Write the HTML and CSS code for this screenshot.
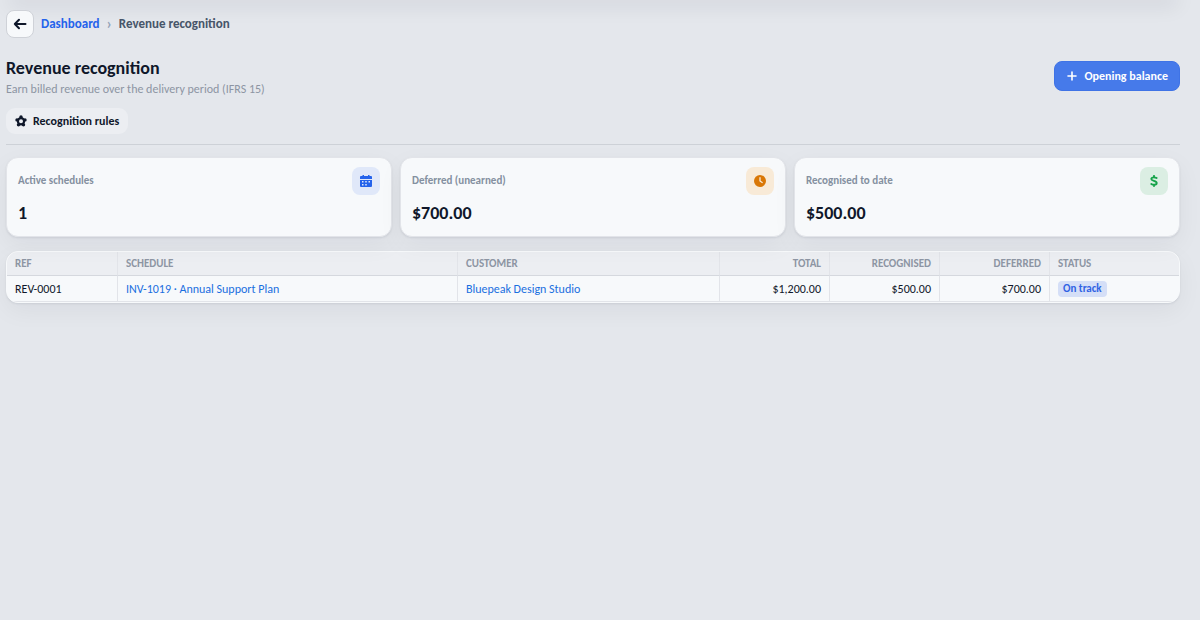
FILE: index.html
```html
<!DOCTYPE html>
<html lang="en">
<head>
    <meta charset="UTF-8">
    <meta name="viewport" content="width=device-width, initial-scale=1.0">
    <title>Revenue recognition</title>
    <link rel="stylesheet" href="styles.css">
</head>
<body>

<div class="topbar-edge"></div>

<main class="page">
    <nav class="breadcrumb" aria-label="Breadcrumb">
        <button type="button" class="back-button" aria-label="Back">
            <svg width="14" height="14" viewBox="0 0 14 14" fill="none" stroke="currentColor" stroke-width="2" stroke-linecap="round" stroke-linejoin="round"><path d="M12.5 7H1.8M6 2.7L1.8 7L6 11.3"/></svg>
        </button>
        <a href="#">Dashboard</a>
        <span class="separator">›</span>
        <span class="current">Revenue recognition</span>
    </nav>

    <header class="page-header">
        <div>
            <h1>Revenue recognition</h1>
            <p class="subtitle">Earn billed revenue over the delivery period (IFRS 15)</p>
        </div>
        <button type="button" class="primary-button">
            <svg width="10" height="10" viewBox="0 0 10 10" fill="none" stroke="currentColor" stroke-width="1.6" stroke-linecap="round"><path d="M5 1v8M1 5h8"/></svg>
            Opening balance
        </button>
    </header>

    <div class="toolbar">
        <button type="button" class="rules-button">
            <svg width="12" height="12" viewBox="0 0 12 12" fill="currentColor"><circle cx="6" cy="6.2" r="3.1" fill="none" stroke="currentColor" stroke-width="2.2"/><circle cx="6" cy="2" r="1.7"/><circle cx="10" cy="4.9" r="1.7"/><circle cx="8.5" cy="9.8" r="1.7"/><circle cx="3.5" cy="9.8" r="1.7"/><circle cx="2" cy="4.9" r="1.7"/></svg>
            Recognition rules
        </button>
    </div>

    <section class="stats">
        <div class="card">
            <div class="card-top">
                <span class="card-label">Active schedules</span>
                <span class="card-icon blue">
                    <svg width="12" height="12" viewBox="0 0 12 12"><path fill="currentColor" fill-rule="evenodd" d="M2.5 0h1.5v1h4V0h1.5v1H11q1 0 1 1v2H0V2q0-1 1-1h1.5ZM0 5h12v6q0 1-1 1H1q-1 0-1-1ZM2 6v1.5h1.5V6ZM5.25 6v1.5h1.5V6ZM8.5 6v1.5H10V6ZM2 9v1.5h1.5V9ZM5.25 9v1.5h1.5V9Z"/></svg>
                </span>
            </div>
            <div class="card-value">1</div>
        </div>
        <div class="card">
            <div class="card-top">
                <span class="card-label">Deferred (unearned)</span>
                <span class="card-icon orange">
                    <svg width="12" height="12" viewBox="0 0 12 12"><circle cx="6" cy="6" r="6" fill="currentColor"/><path d="M6 2.7V6l2.2 1.5" fill="none" stroke="#f8ead7" stroke-width="1.3" stroke-linecap="round" stroke-linejoin="round"/></svg>
                </span>
            </div>
            <div class="card-value">$700.00</div>
        </div>
        <div class="card">
            <div class="card-top">
                <span class="card-label">Recognised to date</span>
                <span class="card-icon green">
                    <svg width="12" height="12" viewBox="0 0 12 12" fill="none" stroke="currentColor" stroke-width="1.9" stroke-linecap="round"><path d="M6 .9v1.3M6 9.8v1.3M8.6 3C7.6 2.3 3.5 1.6 3.3 4C3.2 6.2 8.7 5.6 8.7 8C8.7 10.5 4.4 9.8 3.3 9"/></svg>
                </span>
            </div>
            <div class="card-value">$500.00</div>
        </div>
    </section>

    <div class="table-wrap">
        <table>
            <thead>
                <tr>
                    <th class="col-ref">Ref</th>
                    <th class="col-schedule">Schedule</th>
                    <th>Customer</th>
                    <th class="col-amount">Total</th>
                    <th class="col-amount">Recognised</th>
                    <th class="col-amount">Deferred</th>
                    <th class="col-status">Status</th>
                </tr>
            </thead>
            <tbody>
                <tr>
                    <td>REV-0001</td>
                    <td><a href="#">INV-1019 · Annual Support Plan</a></td>
                    <td><a href="#">Bluepeak Design Studio</a></td>
                    <td class="col-amount">$1,200.00</td>
                    <td class="col-amount">$500.00</td>
                    <td class="col-amount">$700.00</td>
                    <td><span class="badge">On track</span></td>
                </tr>
            </tbody>
        </table>
    </div>
</main>

</body>
</html>
```
FILE: styles.css
```css
* {
    box-sizing: border-box;
}

body {
    margin: 0;
    background-color: #e4e7ec;
    color: #0f172a;
    font-family: Calibri, Carlito, Lato, sans-serif;
    font-size: 12px;
    line-height: 16px;
}

button {
    font: inherit;
    color: inherit;
    cursor: pointer;
}

a {
    color: #1a6fe0;
    text-decoration: none;
}

/* Shadow cast by the bar above the page */
.topbar-edge {
    height: 0;
    margin: 0 28px 0 14px;
    box-shadow: 0 0 20px 6px rgba(15, 23, 42, 0.09);
}

.page {
    padding: 10px 20px 24px 6px;
}

.breadcrumb {
    display: flex;
    align-items: center;
    gap: 7px;
    font-size: 13px;
    font-weight: bold;
}

.breadcrumb a {
    color: #2563eb;
}

.separator {
    color: #94a3b8;
    font-size: 15px;
}

.current {
    color: #475569;
}

.back-button {
    display: flex;
    align-items: center;
    justify-content: center;
    width: 28px;
    height: 28px;
    padding: 0;
    background-color: #f7f9fb;
    border: 1px solid #cfd2d8;
    border-radius: 8px;
}

.page-header {
    display: flex;
    align-items: flex-start;
    justify-content: space-between;
    margin-top: 20px;
}

h1 {
    margin: 0;
    font-size: 18px;
    line-height: 20px;
}

.subtitle {
    margin: 3px 0 0;
    color: #8d95a3;
}

.primary-button {
    display: flex;
    align-items: center;
    gap: 7px;
    height: 30px;
    padding: 0 11px 0 12px;
    margin-top: 3px;
    background-color: #467aea;
    border: 1px solid #3f73e6;
    border-radius: 8px;
    color: #fff;
    font-size: 12px;
    font-weight: bold;
}

.toolbar {
    display: flex;
    padding-bottom: 10px;
    margin-top: 11px;
    border-bottom: 1px solid #cdd1d7;
}

.rules-button {
    display: flex;
    align-items: center;
    gap: 6px;
    height: 26px;
    padding: 0 9px;
    background-color: #eceef2;
    border: none;
    border-radius: 9px;
    font-weight: bold;
}

.stats {
    display: grid;
    grid-template-columns: repeat(3, 1fr);
    gap: 8px;
    margin-top: 12px;
}

.card {
    padding: 9px 11px 11px;
    background-color: #f7f9fb;
    border: 1px solid #e2e4e9;
    border-radius: 12px;
    box-shadow: 0 1px 2px rgba(15, 23, 42, 0.08), 0 8px 24px rgba(15, 23, 42, 0.05);
}

.card-top {
    display: flex;
    align-items: center;
    justify-content: space-between;
}

.card-label {
    color: #8490a0;
    font-size: 11px;
    font-weight: bold;
}

.card-icon {
    display: flex;
    align-items: center;
    justify-content: center;
    width: 28px;
    height: 28px;
    border-radius: 8px;
}

.blue {
    background-color: #e0e8f9;
    color: #2563eb;
}

.orange {
    background-color: #f8ead7;
    color: #d97706;
}

.green {
    background-color: #dbeee3;
    color: #16a34a;
}

.card-value {
    margin-top: 6px;
    font-size: 18px;
    font-weight: bold;
    line-height: 24px;
}

.table-wrap {
    margin-top: 14px;
    overflow: hidden;
    background-color: #f7f9fb;
    border: 1px solid #f7f9fb;
    border-radius: 12px;
    box-shadow: 0 1px 2px rgba(15, 23, 42, 0.08), 0 8px 24px rgba(15, 23, 42, 0.05);
}

table {
    width: 100%;
    table-layout: fixed;
    border-collapse: separate;
    border-spacing: 0;
}

th,
td {
    padding: 0 8px;
    border-right: 1px solid #e2e4e9;
    text-align: left;
}

th:last-child,
td:last-child {
    border-right: none;
}

th {
    height: 24px;
    background-color: #eceef2;
    border-bottom: 1px solid #d5d8de;
    color: #8d95a3;
    font-size: 11px;
    text-transform: uppercase;
}

td {
    height: 26px;
    border-bottom: 1px solid #e2e4e9;
}

.col-ref {
    width: 111px;
}

.col-schedule {
    width: 29%;
}

.col-amount {
    width: 110px;
    text-align: right;
}

.col-status {
    width: 129px;
}

.badge {
    display: inline-block;
    padding: 0 5px;
    background-color: #d5dff7;
    border-radius: 4px;
    color: #2f62e4;
    font-size: 11px;
    font-weight: bold;
}
```
